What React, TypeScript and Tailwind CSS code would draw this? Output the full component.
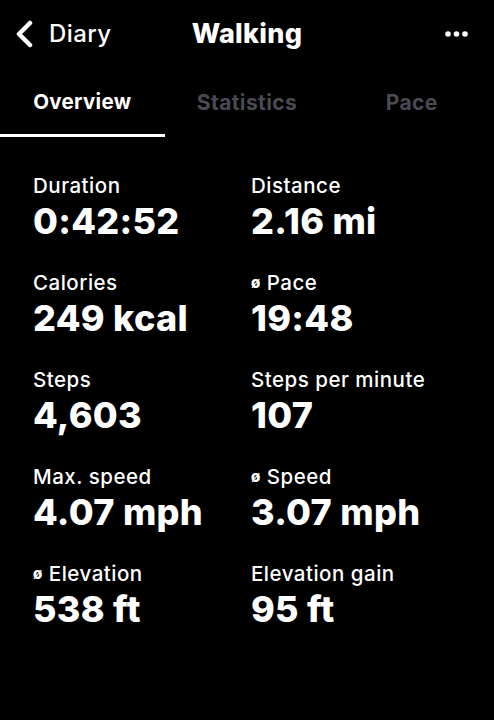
import React from 'react';

const stats: { label: string; avg?: boolean; value: string }[][] = [
  [
    { label: 'Duration', value: '0:42:52' },
    { label: 'Distance', value: '2.16 mi' },
  ],
  [
    { label: 'Calories', value: '249 kcal' },
    { label: 'Pace', avg: true, value: '19:48' },
  ],
  [
    { label: 'Steps', value: '4,603' },
    { label: 'Steps per minute', value: '107' },
  ],
  [
    { label: 'Max. speed', value: '4.07 mph' },
    { label: 'Speed', avg: true, value: '3.07 mph' },
  ],
  [
    { label: 'Elevation', avg: true, value: '538 ft' },
    { label: 'Elevation gain', value: '95 ft' },
  ],
];

const Stat = ({ label, avg, value }: { label: string; avg?: boolean; value: string }) => (
  <div className="flex flex-col">
    <div className="flex items-center text-[20.5px] font-medium leading-[24px] tracking-[0.5px] text-white">
      {avg && <span className="mr-[6px] text-[15px] font-extrabold">ø</span>}
      {label}
    </div>
    <div className="mt-[2px] text-[36px] font-extrabold leading-[42px] tracking-[0.3px] text-white">{value}</div>
  </div>
);

export default function App() {
  return (
    <div className="min-h-[720px] w-[494px] bg-black font-['Inter',sans-serif] text-white">
      {/* header */}
      <div className="flex h-[68px] items-center px-[13px]">
        <div className="flex w-[140px] items-center gap-[14px]">
          <svg width="22" height="28" viewBox="0 0 22 28" fill="none">
            <path d="M17 3 L6 14 L17 25" stroke="white" strokeWidth="4.5" strokeLinecap="round" strokeLinejoin="round" />
          </svg>
          <span className="text-[24px] font-medium tracking-[0.4px]">Diary</span>
        </div>
        <div className="flex-1 text-center text-[27px] font-extrabold tracking-[0.3px]">Walking</div>
        <div className="flex w-[140px] justify-end pr-[13px]">
          <svg width="23" height="6" viewBox="0 0 23 6">
            <circle cx="3" cy="3" r="2.8" fill="white" />
            <circle cx="11.5" cy="3" r="2.8" fill="white" />
            <circle cx="20" cy="3" r="2.8" fill="white" />
          </svg>
        </div>
      </div>

      {/* tabs */}
      <div className="grid grid-cols-3">
        <div className="flex flex-col items-center">
          <span className="pt-[19px] pb-[16px] text-[20.5px] font-bold tracking-[0.3px]">Overview</span>
          <div className="h-[3px] w-full bg-white" />
        </div>
        <div className="flex justify-center">
          <span className="pt-[19px] text-[21px] font-bold tracking-[0.4px] text-[#4a4a54]">Statistics</span>
        </div>
        <div className="flex justify-center">
          <span className="pt-[19px] text-[21px] font-bold tracking-[0.4px] text-[#4a4a54]">Pace</span>
        </div>
      </div>

      {/* stats */}
      <div className="flex flex-col gap-[29px] px-[33px] pt-[37px]">
        {stats.map((row, i) => (
          <div key={i} className="grid grid-cols-[218px_1fr]">
            {row.map((s) => (
              <Stat key={s.label} {...s} />
            ))}
          </div>
        ))}
      </div>
    </div>
  );
}
